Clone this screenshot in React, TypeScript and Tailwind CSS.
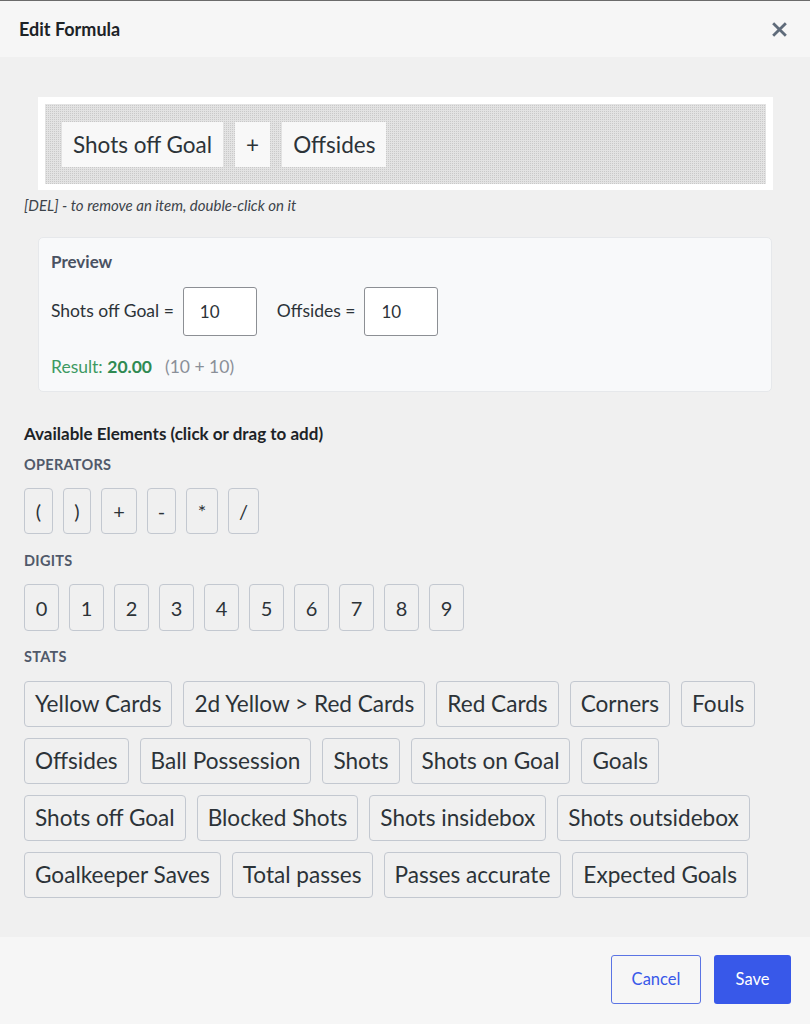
import { useState } from 'react'

const OPERATORS = [
  { label: '(', w: 'w-[29px]' },
  { label: ')', w: 'w-[28px]' },
  { label: '+', w: 'w-[36px]' },
  { label: '-', w: 'w-[29px]' },
  { label: '*', w: 'w-[32px]' },
  { label: '/', w: 'w-[31px]' },
]
const DIGITS = ['0', '1', '2', '3', '4', '5', '6', '7', '8', '9']
const STATS = [
  'Yellow Cards',
  '2d Yellow > Red Cards',
  'Red Cards',
  'Corners',
  'Fouls',
  'Offsides',
  'Ball Possession',
  'Shots',
  'Shots on Goal',
  'Goals',
  'Shots off Goal',
  'Blocked Shots',
  'Shots insidebox',
  'Shots outsidebox',
  'Goalkeeper Saves',
  'Total passes',
  'Passes accurate',
  'Expected Goals',
]

type Token = { kind: 'stat' | 'op'; label: string }

function Chip({ label, onAdd, className }: { label: string; onAdd: () => void; className: string }) {
  return (
    <button
      onClick={onAdd}
      className={`border border-[#c3c8d0] rounded-[4px] text-[#2c3338] leading-none flex items-center justify-center ${className}`}
    >
      {label}
    </button>
  )
}

function SectionLabel({ children }: { children: string }) {
  return <div className="text-[14.5px] leading-[18px] font-bold text-[#50596a] uppercase tracking-[0.02em]">{children}</div>
}

export default function App() {
  const [tokens, setTokens] = useState<Token[]>([
    { kind: 'stat', label: 'Shots off Goal' },
    { kind: 'op', label: '+' },
    { kind: 'stat', label: 'Offsides' },
  ])
  const [values, setValues] = useState<Record<string, string>>({ 'Shots off Goal': '10', Offsides: '10' })

  const add = (t: Token) => setTokens(prev => [...prev, t])
  const remove = (i: number) => setTokens(prev => prev.filter((_, j) => j !== i))

  const stats = tokens.filter(t => t.kind === 'stat').map(t => t.label)
  const expr = tokens.map(t => (t.kind === 'stat' ? values[t.label] ?? '0' : t.label)).join(' ')
  let result = ''
  try {
    // formula only holds digits, operators and stat values here
    result = Number(Function(`return (${expr})`)()).toFixed(2)
  } catch {
    result = '—'
  }

  return (
    <div className="w-[810px] h-[1024px] flex flex-col bg-[#f0f0f0] font-['Lato',sans-serif] text-[#2c3338] overflow-hidden">
      {/* Header */}
      <div className="h-[57px] shrink-0 bg-[#f6f6f6] border-t border-[#6b6b6b] flex items-center justify-between pl-[19px] pr-[23px]">
        <h1 className="text-[18px] font-bold text-[#1d2327]">Edit Formula</h1>
        <button className="text-[#5f6b7a]" aria-label="Close">
          <svg width="15" height="15" viewBox="0 0 14 14" fill="none" stroke="currentColor" strokeWidth="2.6" strokeLinecap="square">
            <path d="M2 2L12 12M12 2L2 12" />
          </svg>
        </button>
      </div>

      {/* Body */}
      <div className="flex-1 px-[24px] pt-[40px]">
        <div className="ml-[14px] w-[735px] bg-white p-[7px] pb-[6px]">
          <div className="h-[80px] pt-[18px] pl-[17px] flex gap-[12px] items-start bg-[#c9c9c9] bg-[image:linear-gradient(90deg,#e3e3e3_1px,transparent_1px),linear-gradient(#e3e3e3_1px,transparent_1px)] bg-[length:2px_2px]">
            {tokens.map((t, i) => (
              <span
                key={i}
                onDoubleClick={() => remove(i)}
                className="h-[45px] px-[11px] bg-[#f8f8f8] flex items-center text-[22.5px] text-[#2c3338] cursor-pointer select-none"
              >
                {t.label}
              </span>
            ))}
          </div>
        </div>
        <p className="mt-[6px] text-[15px] leading-[18px] italic text-[#3c434a]">[DEL] - to remove an item, double-click on it</p>

        {/* Preview */}
        <div className="mt-[23px] ml-[14px] w-[734px] h-[155px] bg-[#f8f9fa] border border-[#e6e8eb] rounded-[5px] pl-[12px] pt-[13px]">
          <div className="text-[17px] leading-[22px] font-bold text-[#4a5262]">Preview</div>
          <div className="mt-[14px] flex items-center gap-[20px]">
            {stats.map(s => (
              <label key={s} className="flex items-center gap-[9px] text-[17.5px] text-[#2c3338]">
                {s} =
                <input
                  value={values[s] ?? ''}
                  onChange={e => setValues(v => ({ ...v, [s]: e.target.value }))}
                  className="w-[74px] h-[49px] bg-white border border-[#8c8f94] rounded-[3px] pl-[16px] text-[17px] text-[#2c3338] outline-none"
                />
              </label>
            ))}
          </div>
          <div className="mt-[20px] text-[17.5px] leading-[22px] text-[#3d9a62]">
            Result: <span className="font-bold text-[#2f8a52]">{result}</span>
            <span className="ml-[13px] text-[#8a8f98]">({expr})</span>
          </div>
        </div>

        {/* Palette */}
        <div className="mt-[31px] text-[17px] leading-[22px] font-bold text-[#1d2327]">Available Elements (click or drag to add)</div>

        <div className="mt-[11px]">
          <SectionLabel>Operators</SectionLabel>
        </div>
        <div className="mt-[14px] flex gap-[10px]">
          {OPERATORS.map(o => (
            <Chip key={o.label} label={o.label} onAdd={() => add({ kind: 'op', label: o.label })} className={`h-[46px] text-[20px] ${o.w}`} />
          ))}
        </div>

        <div className="mt-[18px]">
          <SectionLabel>Digits</SectionLabel>
        </div>
        <div className="mt-[14px] flex gap-[10px]">
          {DIGITS.map(d => (
            <Chip key={d} label={d} onAdd={() => add({ kind: 'op', label: d })} className="h-[47px] w-[35px] text-[20px]" />
          ))}
        </div>

        <div className="mt-[17px]">
          <SectionLabel>Stats</SectionLabel>
        </div>
        <div className="mt-[15px] w-[745px] flex flex-wrap gap-x-[11px] gap-y-[11px]">
          {STATS.map(s => (
            <Chip key={s} label={s} onAdd={() => add({ kind: 'stat', label: s })} className="h-[46px] px-[10px] text-[22.6px]" />
          ))}
        </div>
      </div>

      {/* Footer */}
      <div className="h-[87px] shrink-0 bg-[#f6f6f6] flex justify-end items-start pt-[18px] pr-[19px] gap-[13px]">
        <button className="w-[90px] h-[49px] border border-[#5b74e4] rounded-[3px] text-[16.5px] text-[#3858e9]">Cancel</button>
        <button className="w-[77px] h-[49px] bg-[#3858e9] rounded-[3px] text-[16.5px] text-white">Save</button>
      </div>
    </div>
  )
}
